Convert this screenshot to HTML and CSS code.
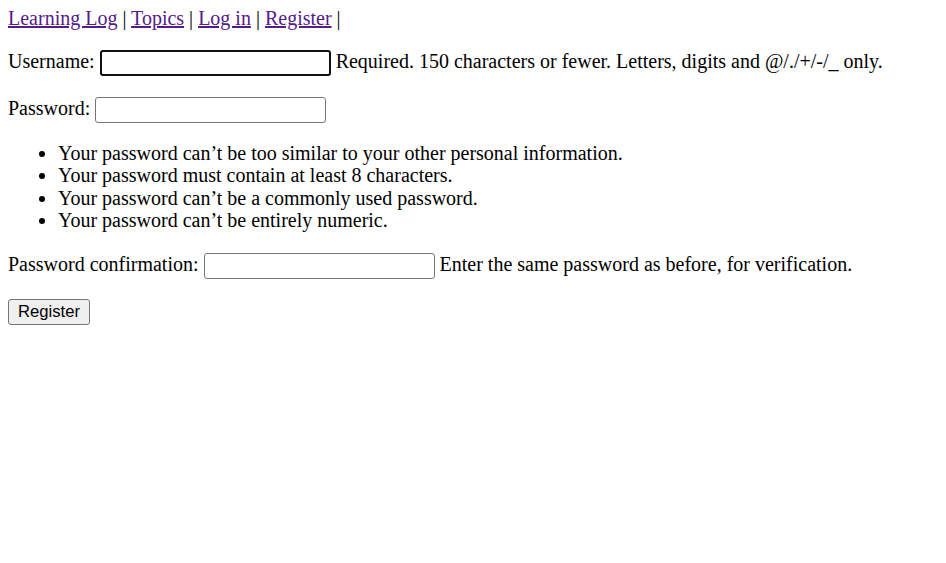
FILE: index.html
```html
<!DOCTYPE html>
<html lang="en">
<head>
<meta charset="utf-8">
<title>Register</title>
<link rel="stylesheet" href="styles.css">
</head>
<body>
<p class="nav">
  <a href="#" class="navlink">Learning Log</a> |
  <a href="#" class="navlink">Topics</a> |
  <a href="#" class="navlink">Log in</a> |
  <a href="#" class="navlink">Register</a> |
</p>
<form class="reg-form" action="#" method="post">
  <p class="row"><label for="id_username">Username:</label> <input type="text" name="username" maxlength="150" class="field field-focused" id="id_username"> <span class="helptext">Required. 150 characters or fewer. Letters, digits and @/./+/-/_ only.</span></p>
  <p class="row row-pw"><label for="id_password1">Password:</label> <input type="password" name="password1" class="field" id="id_password1"></p>
  <ul class="helplist">
    <li>Your password can’t be too similar to your other personal information.</li>
    <li>Your password must contain at least 8 characters.</li>
    <li>Your password can’t be a commonly used password.</li>
    <li>Your password can’t be entirely numeric.</li>
  </ul>
  <p class="row"><label for="id_password2">Password confirmation:</label> <input type="password" name="password2" class="field" id="id_password2"> <span class="helptext">Enter the same password as before, for verification.</span></p>
  <button type="submit" name="submit" class="submit-btn">Register</button>
</form>
</body>
</html>
```
FILE: styles.css
```css
body {
  margin: 0 8px;
  padding-top: 7px;
  font-family: "Liberation Serif", "Times New Roman", serif;
  font-size: 20px;
  color: #000;
  background: #fff;
}
.nav {
  margin: 0;
}
.navlink {
  color: #551a8b;
}
.row {
  margin: 20px 0;
}
.row-pw {
  margin: 21px 0 19px;
}
.field {
  box-sizing: border-box;
  width: 231px;
  height: 26px;
  padding: 1px 3px;
  border: 1px solid #767676;
  border-radius: 3px;
  background: #fff;
  font-family: "Liberation Sans", Arial, sans-serif;
  font-size: 16.67px;
  vertical-align: baseline;
}
.field-focused {
  border: 2px solid #101010;
  border-radius: 3px;
  outline: none;
}
.helplist {
  margin: 19px 0 21px;
  padding-left: 50px;
  line-height: 22.4px;
}
.submit-btn {
  box-sizing: border-box;
  height: 26px;
  margin-top: -2px;
  padding: 1px 9px;
  border: 1px solid #767676;
  border-radius: 3px;
  background: #efefef;
  color: #000;
  font-family: "Liberation Sans", Arial, sans-serif;
  font-size: 16.67px;
}
```
